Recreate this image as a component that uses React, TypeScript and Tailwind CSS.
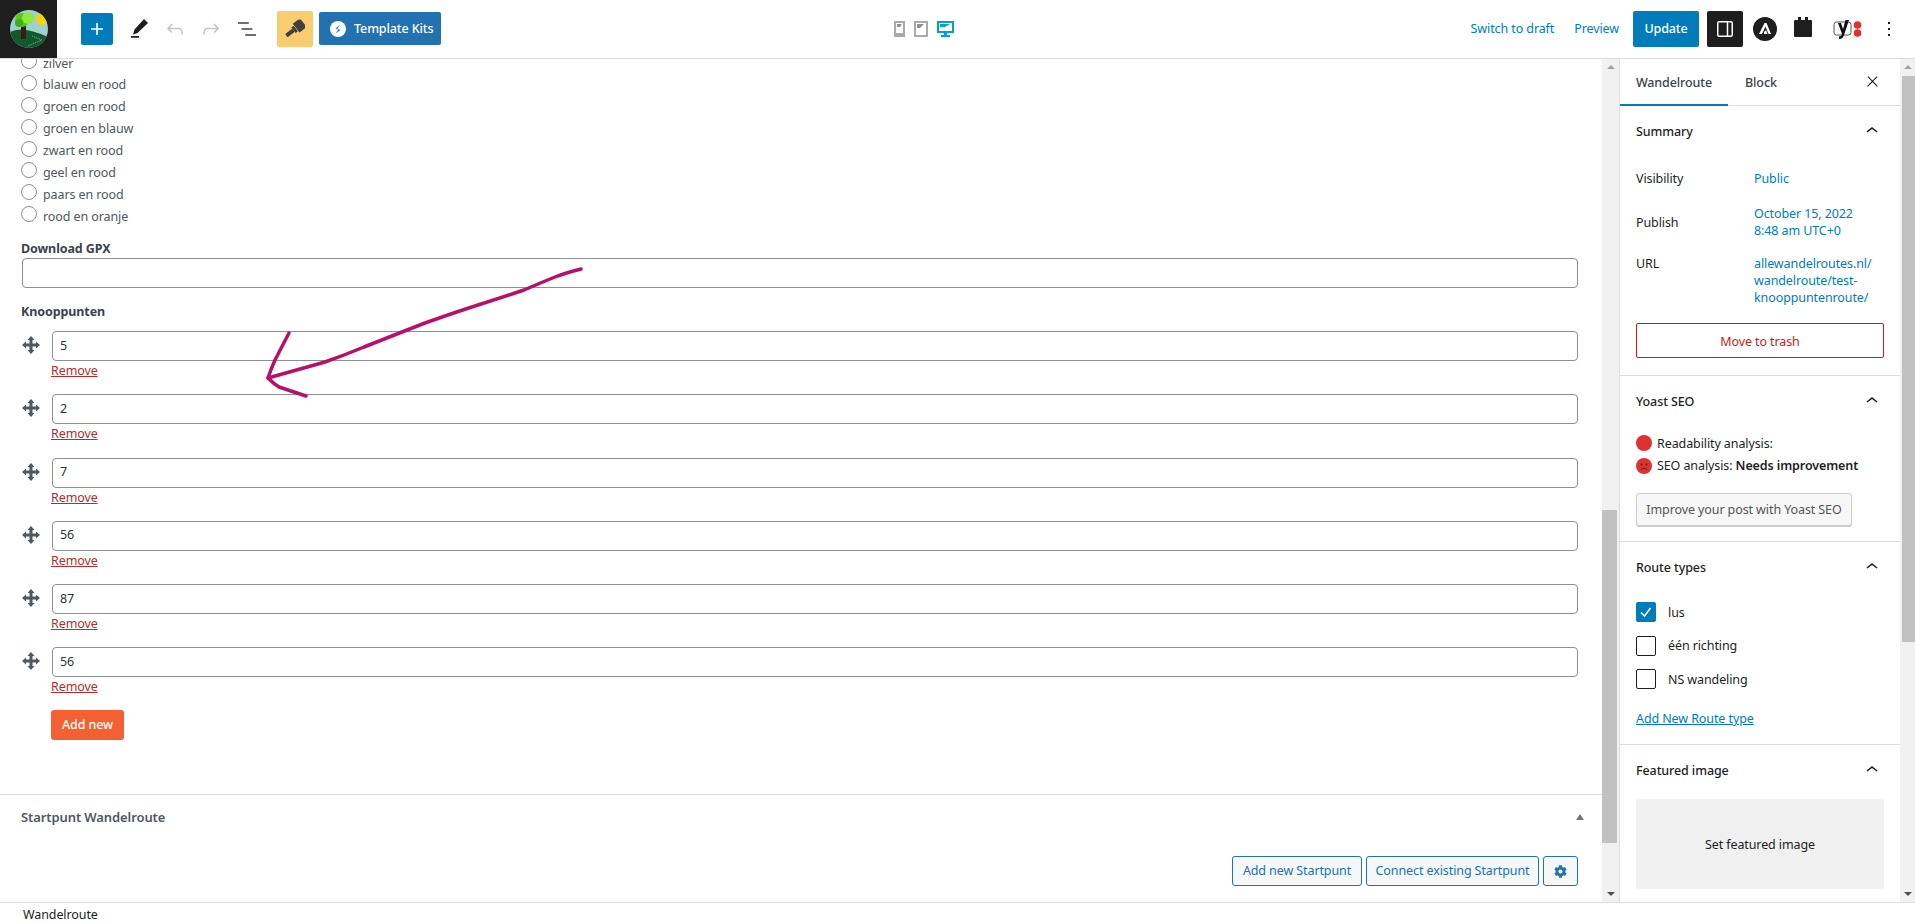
import { FaCog } from "react-icons/fa";

const colours = ["zilver", "blauw en rood", "groen en rood", "groen en blauw", "zwart en rood", "geel en rood", "paars en rood", "rood en oranje"];
const points = ["5", "2", "7", "56", "87", "56"];

function WpIcon({ d, className }: { d: string; className?: string }) {
  return (
    <svg viewBox="0 0 24 24" width="24" height="24" fill="currentColor" className={className}>
      <path d={d} />
    </svg>
  );
}

const chevronUp = "M6.5 12.4L12 8l5.5 4.4-.9 1.2L12 10l-4.5 3.6-1-1.2z";

function ToolButton({ d, className }: { d: string; className: string }) {
  return (
    <div className={`flex h-9 w-9 items-center justify-center ${className}`}>
      <WpIcon d={d} />
    </div>
  );
}

function Logo() {
  return (
    <div className="flex h-[59px] w-[57px] shrink-0 items-center justify-center bg-[#1e1e1e]">
      <svg viewBox="0 0 38 38" width="38" height="38">
        <clipPath id="logo-clip">
          <circle cx="19" cy="19" r="19" />
        </clipPath>
        <g clipPath="url(#logo-clip)">
          <rect width="38" height="38" fill="#9fd0cf" />
          <circle cx="32" cy="9" r="6" fill="#f7d400" />
          <path d="M0 22 Q12 15 38 27 V38 H0Z" fill="#0f5a2c" />
          <path d="M18 36 L32 30 L22 26" fill="none" stroke="#8fb79b" strokeWidth="0.8" strokeDasharray="1.5 1" />
          <rect x="11" y="15" width="5" height="14" fill="#3a1c12" />
          <circle cx="12" cy="10" r="7" fill="#57c81e" />
          <circle cx="18" cy="8" r="6" fill="#8fe83c" />
          <circle cx="9" cy="13" r="4" fill="#3fae1b" />
        </g>
      </svg>
    </div>
  );
}

function DeviceIcons() {
  return (
    <div className="ml-[453px] flex items-start gap-[9px]">
      <svg viewBox="0 0 11 16" width="11" height="16">
        <path fillRule="evenodd" d="M0 0h11v16H0zM2 2v10h7V2z" fill="#a7aaad" />
        <path d="M3 3h5l-2 3H3z" fill="#8c8f94" />
      </svg>
      <svg viewBox="0 0 14 16" width="14" height="16">
        <path fillRule="evenodd" d="M0 0h14v16H0zM2 2v12h10V2z" fill="#a7aaad" />
        <path d="M3 3h7l-4 4H3z" fill="#8c8f94" />
      </svg>
      <svg viewBox="0 0 17 16" width="17" height="16">
        <path fillRule="evenodd" d="M0 0h17v12H0zM2 2v8h13V2z" fill="#00a0d2" />
        <path d="M3 3h10l-5 3H3zM7 12h3v2h3v2H4v-2h3z" fill="#00a0d2" />
      </svg>
    </div>
  );
}

function TopBar() {
  return (
    <header className="flex h-[59px] shrink-0 items-center border-b border-[#dddddd] bg-white pb-px">
      <Logo />
      <div className="ml-6 flex h-8 w-8 items-center justify-center rounded-[2px] bg-[#007cba] text-white">
        <WpIcon d="M18 11.2h-5.2V6h-1.6v5.2H6v1.6h5.2V18h1.6v-5.2H18z" />
      </div>
      <div className="ml-2 flex">
        <ToolButton className="text-[#1e1e1e]" d="M17 2 L21 6 L10.5 16 L6 17.5 L7.5 12.5Z M4 19h8v1.7H4z" />
        <ToolButton className="text-[#c3c4c7]" d="M18.3 11.7c-.6-.6-1.4-.9-2.3-.9H6.7l2.9-3.3-1.1-1-4.5 5L8.5 16l1-1-2.7-2.7H16c.5 0 .9.2 1.3.5 1 1 1 3.4 1 4.5v.3h1.5v-.2c0-1.5 0-4.3-1.5-5.7z" />
        <ToolButton className="text-[#c3c4c7]" d="M15.6 6.5l-1.1 1 2.9 3.3H8c-.9 0-1.7.3-2.3.9-1.4 1.5-1.4 4.2-1.4 5.6v.2h1.5v-.3c0-1.1 0-3.5 1-4.5.3-.3.7-.5 1.3-.5h9.2L14.5 15l1.1 1.1 4.6-4.6-4.6-5z" />
        <ToolButton className="text-[#3c434a]" d="M13.8 5.2H3v1.5h10.8V5.2zm-3.6 12v1.5H21v-1.5H10.2zm7.2-6H6.6v1.5h10.8v-1.5z" />
      </div>
      <div className="ml-3 flex h-9 w-9 items-center justify-center rounded-[2px] bg-[#f9cd6f]">
        <svg viewBox="0 0 20 20" width="20" height="20" fill="#3f3f3f">
          <g transform="rotate(-38 10 10)">
            <rect x="-1" y="8" width="9" height="4" rx="1" />
            <rect x="8" y="6.5" width="3" height="7" />
            <path d="M11.5 4.5 H18 L20.5 6 V14 L18 15.5 H11.5Z" />
          </g>
        </svg>
      </div>
      <div className="ml-[6px] flex h-[33px] w-[122px] items-center gap-2 rounded-[2px] bg-[#2271b1] pl-[11px] text-[12.5px] font-medium text-white">
        <svg viewBox="0 0 16 16" width="16" height="16">
          <circle cx="8" cy="8" r="8" fill="#ffffff" />
          <path d="M10.5 3.5 L5.5 7.5 L8.5 8.5 L5.5 12.5 L10.5 9 L7.5 7.5Z" fill="#2271b1" />
        </svg>
        <span className="pt-px">Template Kits</span>
      </div>
      <DeviceIcons />
      <div className="ml-auto flex items-center pr-[14px]">
        <span className="pt-[2px] text-[12.5px] text-[#007cba]">Switch to draft</span>
        <span className="ml-5 pt-[2px] text-[12.5px] text-[#007cba]">Preview</span>
        <div className="ml-[14px] flex h-9 w-[66px] items-center justify-center rounded-[2px] bg-[#007cba] pt-[2px] text-[12.5px] font-medium text-white">Update</div>
        <div className="ml-2 flex h-9 w-9 items-center justify-center rounded-[2px] bg-[#1e1e1e] text-white">
          <svg viewBox="0 0 24 24" width="24" height="24" fill="none" stroke="currentColor" strokeWidth="1.5">
            <rect x="4.75" y="4.75" width="14.5" height="14.5" rx="1.5" />
            <path d="M14.5 5v14" />
          </svg>
        </div>
        <svg viewBox="0 0 24 24" width="24" height="24" className="ml-[10px]">
          <circle cx="12" cy="12" r="12" fill="#1e1e1e" />
          <path d="M11.5 6 L13.5 6 L18 17 L15.5 17 L12.5 9.5 L9 17 L6 17Z M11 15 L13 13 L14.5 17 L11 17Z" fill="#ffffff" />
        </svg>
        <svg viewBox="0 0 18 20" width="18" height="20" className="ml-[17px] -mt-[4px]" fill="#1e1e1e">
          <path d="M1 3h3V0h3v3h4V0h3v3h3a1 1 0 0 1 1 1v15a1 1 0 0 1-1 1H1a1 1 0 0 1-1-1V4a1 1 0 0 1 1-1z" />
        </svg>
        <svg viewBox="0 0 29 24" width="29" height="24" className="ml-[21px]">
          <rect x="1" y="5" width="17" height="13" rx="2.5" fill="none" stroke="#555555" strokeWidth="1" />
          <path d="M5 6 L8 6 L10 12 L12.5 3 L16 3 L11 18 Q10 22 6 22 L6 19.5 Q8.5 19.5 9 17Z" fill="#111111" />
          <circle cx="24.5" cy="8" r="3.8" fill="#dc3232" />
          <circle cx="24.5" cy="16" r="3.8" fill="#dc3232" />
        </svg>
        <WpIcon d="M13 19h-2v-2h2v2zm0-6h-2v-2h2v2zm0-6h-2V5h2v2z" className="ml-[15px] text-[#1e1e1e]" />
      </div>
    </header>
  );
}

function Radio({ label }: { label: string }) {
  return (
    <div className="flex h-[21.9px] items-center pl-[21px] text-[12.5px] text-[#50575e]">
      <span className="mb-[4px] h-4 w-4 shrink-0 rounded-full border border-[#8c8f94] bg-white" />
      <span className="ml-[6px] pt-[2px]">{label}</span>
    </div>
  );
}

function DragHandle() {
  return (
    <svg viewBox="0 0 18 18" width="18" height="18" fill="#50575e" className="mt-[5px] shrink-0">
      <path d="M9 0 L12.5 4 H10.5 V7.5 H14 V5.5 L18 9 L14 12.5 V10.5 H10.5 V14 H12.5 L9 18 L5.5 14 H7.5 V10.5 H4 V12.5 L0 9 L4 5.5 V7.5 H7.5 V4 H5.5Z" />
    </svg>
  );
}

function PointRow({ value }: { value: string }) {
  return (
    <div className="flex h-[63.2px] pl-[22px] pr-[24px]">
      <DragHandle />
      <div className="ml-[12px] flex-1">
        <div className="flex h-[30px] items-center rounded-[4px] border border-[#8c8f94] pl-[7px] text-[12.5px] text-[#2c3338]">{value}</div>
        <div className="-ml-px mt-[1px] text-[12.5px] text-[#b32d2e] underline">Remove</div>
      </div>
    </div>
  );
}

function OutlineButton({ children, className }: { children: React.ReactNode; className: string }) {
  return (
    <div className={`flex h-[30px] items-center justify-center rounded-[3px] border border-[#2271b1] bg-[#f6f7f7] text-[12.5px] text-[#2271b1] ${className}`}>
      {children}
    </div>
  );
}

function Arrow() {
  return (
    <svg viewBox="0 0 600 420" width="600" height="420" className="pointer-events-none absolute left-0 top-0" fill="none" stroke="#b5106a" strokeWidth="3.5" strokeLinecap="round" strokeLinejoin="round">
      <path d="M581 269 Q565 273 555 277 T524 290 Q500 298 478 305 T425 323 L402 332 L364 347 Q345 355 325 362 L268 378" transform="translate(0 -59)" />
      <path d="M289 333 L275 360 Q271 369 268 378 Q274 384 279 387 L306 396" transform="translate(0 -59)" />
    </svg>
  );
}

function Editor() {
  return (
    <main className="relative flex min-w-0 flex-1 flex-col overflow-hidden">
      <div className="-mt-[7px]">
        {colours.map((c) => (
          <Radio key={c} label={c} />
        ))}
      </div>
      <div className="pl-[21px] pt-[13px] text-[12.5px] font-bold leading-[18px] text-[#3c434a]">Download GPX</div>
      <div className="ml-[22px] mr-[24px] h-[30px] rounded-[4px] border border-[#8c8f94]" />
      <div className="pl-[21px] pt-[15px] text-[12.5px] font-bold leading-[18px] text-[#3c434a]">Knooppunten</div>
      <div className="mt-[10px]">
        {points.map((p, i) => (
          <PointRow key={i} value={p} />
        ))}
      </div>
      <div className="ml-[51px] flex h-[30px] w-[73px] items-center justify-center rounded-[3px] bg-[#f56032] pt-px text-[12.5px] font-medium text-white">Add new</div>
      <div className="mt-[54px] flex-1 border-t border-[#dddddd]">
        <div className="flex h-[44px] items-center justify-between pl-[21px] pr-[18px]">
          <span className="text-[13px] font-semibold text-[#50575e]">Startpunt Wandelroute</span>
          <span className="h-0 w-0 border-x-[4px] border-b-[6px] border-x-transparent border-b-[#72777c]" />
        </div>
        <div className="mt-[17px] flex justify-end gap-[4px] pr-[24px]">
          <OutlineButton className="w-[130px]">Add new Startpunt</OutlineButton>
          <OutlineButton className="w-[173px]">Connect existing Startpunt</OutlineButton>
          <OutlineButton className="w-[35px]">
            <FaCog size={13} />
          </OutlineButton>
        </div>
      </div>
      <Arrow />
    </main>
  );
}

function Scrollbar({ className, thumbTop, thumbHeight }: { className: string; thumbTop: string; thumbHeight: string }) {
  return (
    <div className={`relative flex shrink-0 flex-col bg-[#f1f1f1] ${className}`}>
      <span className="absolute left-1/2 top-[6px] h-0 w-0 -translate-x-1/2 border-x-[4px] border-b-[4px] border-x-transparent border-b-[#a3a3a3]" />
      <div className={`ml-auto bg-[#c1c1c1] ${thumbTop} ${thumbHeight}`} />
      <span className="absolute bottom-[6px] left-1/2 h-0 w-0 -translate-x-1/2 border-x-[4px] border-t-[4px] border-x-transparent border-t-[#505050]" />
    </div>
  );
}

function PanelHeader({ title, className }: { title: string; className: string }) {
  return (
    <div className={`flex items-center justify-between pl-4 pr-4 ${className}`}>
      <span className="mt-[2px] text-[12.5px] font-medium text-[#1e1e1e]">{title}</span>
      <WpIcon d={chevronUp} className="text-[#1e1e1e]" />
    </div>
  );
}

function SummaryRow({ label, children, className }: { label: string; children: React.ReactNode; className: string }) {
  return (
    <div className={`flex text-[12.5px] leading-[17px] ${className}`}>
      <span className="w-[118px] text-[#1e1e1e]">{label}</span>
      <span className="text-[#007cba]">{children}</span>
    </div>
  );
}

function Checkbox({ label, checked }: { label: string; checked?: boolean }) {
  return (
    <div className="flex h-[20px] items-center text-[12.5px] text-[#1e1e1e]">
      {checked ? (
        <span className="flex h-5 w-5 items-center justify-center rounded-[2px] bg-[#007cba]">
          <svg viewBox="0 0 20 20" width="20" height="20" fill="none" stroke="#ffffff" strokeWidth="1.5">
            <path d="M5 10.5 L8.5 14 L14.5 6" />
          </svg>
        </span>
      ) : (
        <span className="h-5 w-5 rounded-[2px] border border-[#1e1e1e] bg-white" />
      )}
      <span className="ml-3 pt-[2px]">{label}</span>
    </div>
  );
}

function Sidebar() {
  return (
    <aside className="flex w-[281px] shrink-0 flex-col overflow-hidden border-l border-[#dddddd] bg-white">
      <div className="flex h-[47px] shrink-0 items-stretch border-b border-[#dddddd] pr-[19px]">
        <div className="-mb-px flex w-[108px] items-center justify-center border-b-[2px] border-[#007cba] pt-[3px] text-[12.5px] font-medium text-[#3c434a]">Wandelroute</div>
        <div className="ml-[17px] flex items-center pt-[3px] text-[12.5px] font-medium text-[#3c434a]">Block</div>
        <WpIcon d="M13 11.8l6.1-6.3-1-1-6.1 6.2-6.1-6.2-1 1 6.1 6.3-6.5 6.7 1 1 6.5-6.6 6.5 6.6 1-1z" className="ml-auto mt-[14px] h-[17px] w-[17px] text-[#1e1e1e]" />
      </div>

      <section className="h-[270px] shrink-0 border-b border-[#dddddd] px-4">
        <PanelHeader title="Summary" className="-mx-4 h-[50px]" />
        <SummaryRow label="Visibility" className="mt-[14px] items-center">Public</SummaryRow>
        <SummaryRow label="Publish" className="mt-[18px] items-center">
          October 15, 2022
          <br />
          8:48 am UTC+0
        </SummaryRow>
        <SummaryRow label="URL" className="mt-[16px]">
          allewandelroutes.nl/
          <br />
          wandelroute/test-
          <br />
          knooppuntenroute/
        </SummaryRow>
        <div className="mt-[17px] flex h-[35px] items-center justify-center rounded-[2px] border border-[#cc1818] pt-[3px] text-[12.5px] text-[#cc1818]">Move to trash</div>
      </section>

      <section className="h-[166px] shrink-0 border-b border-[#dddddd] px-4">
        <PanelHeader title="Yoast SEO" className="-mx-4 h-[50px]" />
        <div className="mt-[8px] flex h-[18px] items-center text-[12.5px] text-[#1e1e1e]">
          <span className="h-4 w-4 rounded-full bg-[#dc3232]" />
          <span className="ml-[5px] pt-[2px]">Readability analysis:</span>
        </div>
        <div className="mt-[5px] flex h-[18px] items-center text-[12.5px] text-[#1e1e1e]">
          <svg viewBox="0 0 16 16" width="16" height="16">
            <circle cx="8" cy="8" r="8" fill="#dc3232" />
            <circle cx="5.5" cy="6.5" r="1" fill="#7a1616" />
            <circle cx="10.5" cy="6.5" r="1" fill="#7a1616" />
            <path d="M5 11.5 Q8 8.5 11 11.5" fill="none" stroke="#7a1616" strokeWidth="1" />
          </svg>
          <span className="ml-[5px]">
            SEO analysis: <span className="font-semibold">Needs improvement</span>
          </span>
        </div>
        <div className="mt-[18px] flex h-[33px] w-[216px] items-center justify-center rounded-[3px] border border-[#cccccc] bg-[#f7f7f7] pt-px text-[12.5px] text-[#555555] shadow-[0_1px_0_#cccccc]">
          Improve your post with Yoast SEO
        </div>
      </section>

      <section className="h-[203px] shrink-0 border-b border-[#dddddd] px-4">
        <PanelHeader title="Route types" className="-mx-4 h-[50px]" />
        <div className="mt-[10px] flex flex-col gap-[13.5px]">
          <Checkbox label="lus" checked />
          <Checkbox label="één richting" />
          <Checkbox label="NS wandeling" />
        </div>
        <div className="mt-[21px] text-[12.5px] text-[#007cba] underline">Add New Route type</div>
      </section>

      <section className="flex-1 px-4">
        <PanelHeader title="Featured image" className="-mx-4 h-[50px]" />
        <div className="mt-[4px] flex h-[90px] items-center justify-center rounded-[2px] bg-[#f0f0f0] pt-[2px] text-[12.5px] text-[#1e1e1e]">Set featured image</div>
      </section>
    </aside>
  );
}

export default function App() {
  return (
    <div className="flex h-screen w-full flex-col overflow-hidden bg-white font-['Noto_Sans','Open_Sans',sans-serif] tracking-[-0.1px]">
      <TopBar />
      <div className="flex min-h-0 flex-1">
        <Editor />
        <Scrollbar className="w-[17px]" thumbTop="mt-[451px]" thumbHeight="h-[333px] w-[15px] mr-[2px]" />
        <Sidebar />
        <Scrollbar className="w-[15px]" thumbTop="mt-[17px]" thumbHeight="h-[566px] w-[13px]" />
      </div>
      <footer className="flex h-[21px] shrink-0 items-center border-t border-[#dddddd] bg-white pl-[23px] pt-[4px] text-[12.5px] text-[#1e1e1e]">Wandelroute</footer>
    </div>
  );
}
